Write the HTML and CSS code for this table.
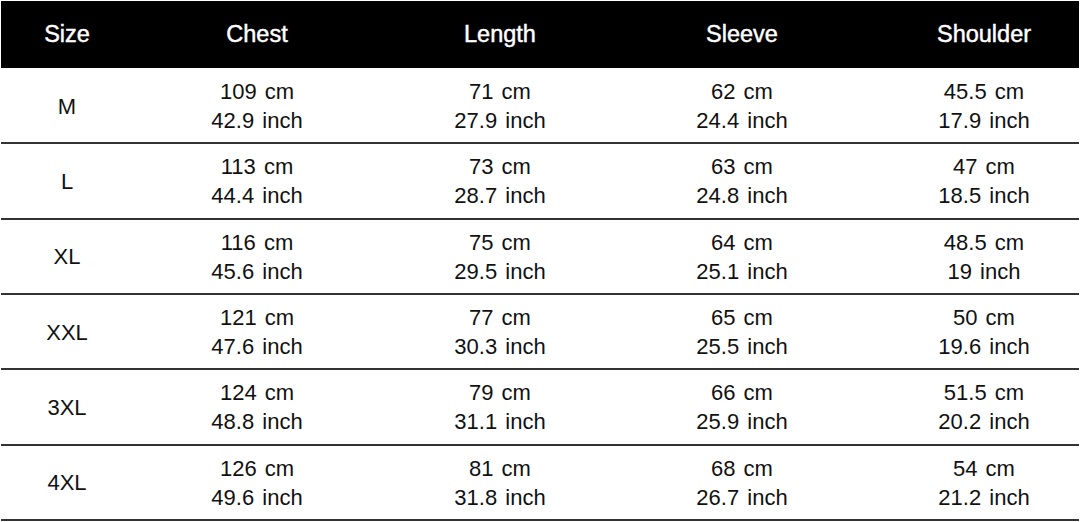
FILE: index.html
```html
<!DOCTYPE html>
<html lang="en">
<head>
<meta charset="utf-8">
<title>Size Chart</title>
<link rel="stylesheet" href="styles.css">
</head>
<body>
<div class="chart">
  <div class="row head">
    <div class="cell">Size</div>
    <div class="cell">Chest</div>
    <div class="cell">Length</div>
    <div class="cell">Sleeve</div>
    <div class="cell last">Shoulder</div>
  </div>
  <div class="body">
    <div class="row">
      <div class="cell">M</div>
      <div class="cell">109 cm<br>42.9 inch</div>
      <div class="cell">71 cm<br>27.9 inch</div>
      <div class="cell">62 cm<br>24.4 inch</div>
      <div class="cell last">45.5 cm<br>17.9 inch</div>
    </div>
    <div class="row">
      <div class="cell">L</div>
      <div class="cell">113 cm<br>44.4 inch</div>
      <div class="cell">73 cm<br>28.7 inch</div>
      <div class="cell">63 cm<br>24.8 inch</div>
      <div class="cell last">47 cm<br>18.5 inch</div>
    </div>
    <div class="row">
      <div class="cell">XL</div>
      <div class="cell">116 cm<br>45.6 inch</div>
      <div class="cell">75 cm<br>29.5 inch</div>
      <div class="cell">64 cm<br>25.1 inch</div>
      <div class="cell last">48.5 cm<br>19 inch</div>
    </div>
    <div class="row">
      <div class="cell">XXL</div>
      <div class="cell">121 cm<br>47.6 inch</div>
      <div class="cell">77 cm<br>30.3 inch</div>
      <div class="cell">65 cm<br>25.5 inch</div>
      <div class="cell last">50 cm<br>19.6 inch</div>
    </div>
    <div class="row">
      <div class="cell">3XL</div>
      <div class="cell">124 cm<br>48.8 inch</div>
      <div class="cell">79 cm<br>31.1 inch</div>
      <div class="cell">66 cm<br>25.9 inch</div>
      <div class="cell last">51.5 cm<br>20.2 inch</div>
    </div>
    <div class="row">
      <div class="cell">4XL</div>
      <div class="cell">126 cm<br>49.6 inch</div>
      <div class="cell">81 cm<br>31.8 inch</div>
      <div class="cell">68 cm<br>26.7 inch</div>
      <div class="cell last">54 cm<br>21.2 inch</div>
    </div>
  </div>
</div>
</body>
</html>
```

FILE: styles.css
```css
html, body {
  margin: 0;
  padding: 0;
  background: #ffffff;
}

body {
  width: 1080px;
  height: 522px;
  overflow: hidden;
  font-family: "Liberation Sans", Arial, sans-serif;
  color: #111111;
}

.chart {
  margin: 1px 1px 0 1px;
  width: 1078px;
}

.row {
  display: grid;
  grid-template-columns: 132px 248px 238px 246px 214px;
  align-items: center;
}

.cell {
  text-align: center;
  font-size: 22px;
  line-height: 29px;
  word-spacing: 2px;
}

.cell.last {
  padding-left: 24px;
}

.head {
  height: 67px;
  background: #000000;
  color: #ffffff;
}

.head .cell {
  font-weight: normal;
  font-size: 23.5px;
  word-spacing: 0;
  -webkit-text-stroke: 0.45px #ffffff;
}

.body {
  margin-top: 1px;
}

.body .row {
  box-sizing: border-box;
  height: 75.33px;
  border-bottom: 2px solid #333333;
  padding-top: 1px;
}
```
